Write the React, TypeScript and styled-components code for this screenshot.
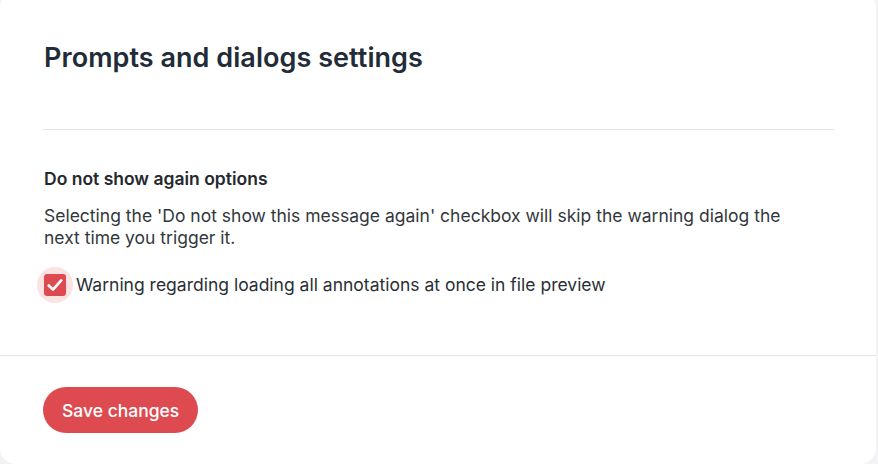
import React from "react";
import styled, { createGlobalStyle } from "styled-components";

const Global = createGlobalStyle`
  html, body { margin: 0; padding: 0; background: #f3f3f6; }
  body { font-family: Inter, "Noto Sans", sans-serif; overflow: hidden; }
`;

const Card = styled.div`
  width: 876px;
  height: 472px;
  margin-top: -8px;
  background: #ffffff;
  border-radius: 16px;
  display: flex;
  flex-direction: column;
  box-sizing: border-box;
  padding-top: 8px;
`;

const Header = styled.div`
  padding: 0 42px 0 43px;
`;

const Title = styled.h1`
  margin: 0;
  padding-top: 41px;
  height: 130px;
  box-sizing: border-box;
  font-size: 27px;
  font-weight: 600;
  letter-spacing: 0.05px;
  line-height: 34px;
  color: #222b38;
  border-bottom: 1px solid #e6e6ea;
  padding-left: 1px;
`;

const Body = styled.div`
  padding: 36px 44px 0;
  height: 226px;
  box-sizing: border-box;
  border-bottom: 1px solid #e6e6ea;
`;

const SectionTitle = styled.h2`
  margin: 0 0 13px;
  font-size: 17.5px;
  font-weight: 600;
  line-height: 26px;
  color: #25282d;
`;

const Description = styled.p`
  margin: 0 0 24px;
  font-size: 17.5px;
  line-height: 22px;
  color: #33373d;
  max-width: 760px;
`;

const CheckRow = styled.label`
  display: flex;
  align-items: center;
  gap: 10px;
  font-size: 17.5px;
  color: #2a2f36;
  line-height: 24px;
`;

const CheckWrap = styled.span`
  position: relative;
  width: 22px;
  height: 22px;
  display: inline-flex;
  align-items: center;
  justify-content: center;
  &::before {
    content: "";
    position: absolute;
    left: -7px;
    top: -7px;
    width: 36px;
    height: 36px;
    border-radius: 50%;
    background: #fbe3e4;
  }
`;

const CheckBox = styled.span`
  position: relative;
  width: 22px;
  height: 22px;
  border-radius: 3px;
  background: #dd4b51;
  display: inline-flex;
  align-items: center;
  justify-content: center;
`;

const Footer = styled.div`
  padding: 31px 43px 0;
`;

const SaveButton = styled.button`
  height: 46px;
  padding: 0 19px;
  border: none;
  border-radius: 23px;
  background: #dd4b51;
  color: #ffffff;
  font-family: Inter, "Noto Sans", sans-serif;
  font-size: 17.5px;
  font-weight: 500;
  cursor: pointer;
`;

export default function App() {
  return (
    <>
      <Global />
      <Card>
        <Header>
          <Title>Prompts and dialogs settings</Title>
        </Header>
        <Body>
          <SectionTitle>Do not show again options</SectionTitle>
          <Description>
            Selecting the 'Do not show this message again' checkbox will skip the warning dialog the next time you trigger it.
          </Description>
          <CheckRow>
            <CheckWrap>
              <CheckBox>
                <svg width="16" height="14" viewBox="0 0 16 14" fill="none">
                  <path d="M1.8 7.5 L6 11.6 L14.2 2.4" stroke="#fff" strokeWidth="2.7" strokeLinecap="round" strokeLinejoin="round" />
                </svg>
              </CheckBox>
            </CheckWrap>
            Warning regarding loading all annotations at once in file preview
          </CheckRow>
        </Body>
        <Footer>
          <SaveButton>Save changes</SaveButton>
        </Footer>
      </Card>
    </>
  );
}
